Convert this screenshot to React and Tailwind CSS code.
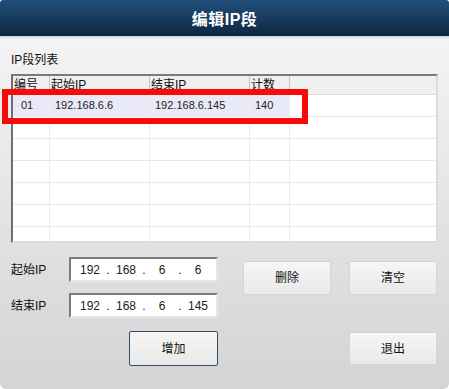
const FONT = { fontFamily: '"Liberation Sans", "Noto Sans CJK SC", sans-serif' }

const ROWS = [
  { no: '01', start: '192.168.6.6', end: '192.168.6.145', count: '140' },
  {}, {}, {}, {}, {}, {},
]

function IpInput({ parts }) {
  return (
    <div className="flex items-center w-[149px] h-[25px] bg-white border-2 border-t-[#7b7b7b] border-l-[#7b7b7b] border-b-[#e6e6e6] border-r-[#e6e6e6] pl-[4px] text-[12px] text-[#222]">
      {parts.map((p, i) => (
        <div key={i} className="flex items-center">
          {i > 0 && <span className="w-[6px] text-center">.</span>}
          <span className="w-[30px] text-center">{p}</span>
        </div>
      ))}
    </div>
  )
}

function Btn({ children, className = '' }) {
  return (
    <button className={'flex items-center justify-center text-[12px] text-[#111] rounded-[2px] bg-gradient-to-b from-[#f6f6f6] to-[#e9e9e9] border border-[#d4d4d4] ' + className}>
      {children}
    </button>
  )
}

export default function App() {
  return (
    <div className="w-[449px] h-[389px] bg-white" style={FONT}>
      <div className="relative w-[449px] h-[389px] rounded-t-[3px] rounded-b-[6px] overflow-hidden flex flex-col bg-gradient-to-b from-[#f7f7f7] to-[#d4d4d4]">
        {/* title bar */}
        <div className="h-[36px] shrink-0 flex items-center justify-center pt-[4px] bg-gradient-to-b from-[#21507d] to-[#0d2741]">
          <span className="text-white text-[16px] font-bold tracking-[0.5px]">编辑IP段</span>
        </div>
        <div className="h-[3px] shrink-0 bg-gradient-to-b from-[#cdcdcd] to-[#f3f3f3]" />

        <div className="px-[11px] pt-[14px] flex flex-col">
          <div className="text-[12px] leading-[14px] text-[#111]">IP段列表</div>

          {/* list */}
          <div className="mt-[7px] w-[427px] h-[169px] overflow-hidden bg-white border-2 border-t-[#7a7a7a] border-l-[#6e6e6e] border-r-[#dcdcdc] border-b-[#dcdcdc]">
            <div className="flex h-[19px] bg-[#efefef] border-b border-[#dcdcdc] text-[12px] text-[#111]">
              <div className="w-[37px] pl-[1px] border-r border-[#c4c4c4] flex items-center">编号</div>
              <div className="w-[100px] pl-[1px] border-r border-[#c4c4c4] flex items-center">起始IP</div>
              <div className="w-[100px] pl-[1px] border-r border-[#c4c4c4] flex items-center">结束IP</div>
              <div className="w-[40px] pl-[1px] border-r border-[#c4c4c4] flex items-center">计数</div>
              <div className="flex-1" />
            </div>
            {ROWS.map((r, i) => (
              <div key={i} className="flex h-[22px] border-b border-[#e9e9e9] text-[11px] text-[#222]">
                <div className={'w-[37px] pl-[8px] border-r border-[#ececec] flex items-center ' + (i === 0 ? 'bg-[#e9e9f8]' : '')}>{r.no}</div>
                <div className={'w-[100px] pl-[5px] border-r border-[#ececec] flex items-center ' + (i === 0 ? 'bg-[#e9e9f8]' : '')}>{r.start}</div>
                <div className={'w-[100px] pl-[5px] border-r border-[#ececec] flex items-center ' + (i === 0 ? 'bg-[#e9e9f8]' : '')}>{r.end}</div>
                <div className={'w-[40px] pl-[5px] border-r border-[#ececec] flex items-center ' + (i === 0 ? 'bg-[#e9e9f8]' : '')}>{r.count}</div>
                <div className="flex-1" />
              </div>
            ))}
          </div>

          {/* form */}
          <div className="mt-[14px] flex">
            <div className="w-[207px] flex flex-col">
              <div className="flex items-center">
                <span className="w-[58px] text-[12px] text-[#111]">起始IP</span>
                <IpInput parts={['192', '168', '6', '6']} />
              </div>
              <div className="mt-[11px] flex items-center">
                <span className="w-[58px] text-[12px] text-[#111]">结束IP</span>
                <IpInput parts={['192', '168', '6', '145']} />
              </div>
              <Btn className="mt-[13px] ml-[118px] w-[89px] h-[35px] !border-[#2f4d6b]">增加</Btn>
            </div>
            <div className="ml-[25px] flex flex-col">
              <div className="mt-[4px] flex gap-[18px]">
                <Btn className="w-[88px] h-[34px]">删除</Btn>
                <Btn className="w-[88px] h-[34px]">清空</Btn>
              </div>
              <Btn className="mt-[37px] ml-[106px] w-[88px] h-[33px]">退出</Btn>
            </div>
          </div>
        </div>

        {/* red highlight annotation */}
        <div className="absolute left-[2px] top-[89px] w-[306px] h-[35px] border-[6px] border-[#f80a0a]" />
      </div>
    </div>
  )
}
